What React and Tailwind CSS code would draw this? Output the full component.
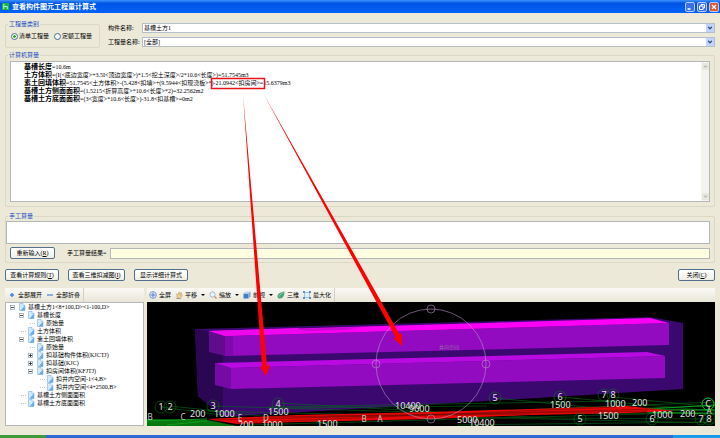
import { ChevronDown } from 'lucide-react';
import clsx from 'clsx';

const formulas = [
  ['基槽长度', '=10.6m'],
  ['土方体积', '=(I(<底边宽度>+3.5I<顶边宽度>)*1.5<挖土深度>/2*10.6<长度>)=51.7545m3'],
  ['素土回填体积', '=51.7545<土方体积>-(5.428<扣墙>+(9.5944<扣现浇板>*)-21.0942<扣房间>=15.6379m3'],
  ['基槽土方侧面面积', '=(1.5215<折算高度>*10.6<长度>*2)=32.2562m2'],
  ['基槽土方底面面积', '=(3<宽度>*10.6<长度>)-31.8<扣基槽>=0m2'],
];

const tree = [
  { depth: 0, mark: '-', text: '基槽土方1<8+100,D><1-100,D>' },
  { depth: 1, mark: '-', text: '基槽长度' },
  { depth: 2, text: '原始量' },
  { depth: 1, text: '土方体积' },
  { depth: 1, mark: '-', text: '素土回填体积' },
  { depth: 2, text: '原始量' },
  { depth: 2, mark: '+', text: '扣基础构件体积(KJCTJ)' },
  { depth: 2, mark: '+', text: '扣基础(KJC)' },
  { depth: 2, mark: '-', text: '扣房间体积(KFJTJ)' },
  { depth: 3, text: '扣井内空间-1<4,B>' },
  { depth: 3, text: '扣井内空间<4+2500,B>' },
  { depth: 1, text: '基槽土方侧面面积' },
  { depth: 1, text: '基槽土方底面面积' },
];

function TitleBar() {
  const button = 'flex size-[10px] items-center justify-center rounded-xs border border-[#b5cbf5]';
  return (
    <header className="flex h-[13px] items-center gap-[3px] bg-linear-to-b from-[#3c94ff] via-[#0054e3] via-25% to-[#0062ff] pr-px pl-[2px]">
      <svg viewBox="0 0 8 8" className="size-[7px]">
        <rect width="8" height="8" rx="1" fill="#18b83c" />
        <path d="M2 1v6M2 4h4v3" stroke="#d4ffd0" fill="none" />
      </svg>
      <h1 className="flex-1 text-[7px] font-bold text-white">查看构件图元工程量计算式</h1>
      <div className="flex gap-[2px]">
        <button aria-label="最小化" className={clsx(button, 'bg-[#3b70ea]')}>
          <svg viewBox="0 0 8 8" className="size-2"><path d="M1.500 6h3" stroke="#fff" strokeWidth="1.500" /></svg>
        </button>
        <button aria-label="还原" className={clsx(button, 'bg-[#3b70ea]')}>
          <svg viewBox="0 0 8 8" className="size-2" fill="none" stroke="#fff"><path d="M3 3V1.500h3.500V5H5M1.500 3h3.500v3.500H1.500z" /></svg>
        </button>
        <button aria-label="关闭窗口" className={clsx(button, 'bg-[#e2552d]')}>
          <svg viewBox="0 0 8 8" className="size-2"><path d="M2 2l4 4M6 2L2 6" stroke="#fff" strokeWidth="1.300" /></svg>
        </button>
      </div>
    </header>
  );
}

function Group({ title, className, children }) {
  return (
    <fieldset className={clsx('relative min-w-0 rounded-xs border border-[#dcd8c6]', className)}>
      <legend className="absolute -top-[5px] left-[2px] bg-[#ece9d8] px-px text-[#1c4fc0]">{title}</legend>
      {children}
    </fieldset>
  );
}

function Combo({ id, label, value }) {
  return (
    <div className="flex items-center">
      <label htmlFor={id} className="w-[34px]">{label}</label>
      <div className="relative flex-1">
        <select id={id} className="block h-[10px] w-full appearance-none border border-[#b5bfc8] bg-white pl-px leading-2">
          <option>{value}</option>
        </select>
        <span className="pointer-events-none absolute inset-y-px right-px flex w-2 items-center justify-center bg-[#c3d3fb]">
          <ChevronDown className="size-[6px] text-[#33507f]" strokeWidth={5} />
        </span>
      </div>
    </div>
  );
}

function PushButton({ className, children }) {
  return (
    <button className={clsx('h-3 rounded-xs border border-[#52708c] bg-linear-to-b from-white to-[#f0efe6] text-center leading-[9px]', className)}>
      {children}
    </button>
  );
}

function ScrollBar() {
  return (
    <div className="flex w-2 flex-col items-center justify-between bg-[#f4f3ee] py-px">
      <div className="flex size-[7px] items-center justify-center bg-[#e8e7e0]"><ChevronDown className="size-[5px] rotate-180 text-[#b9b7ab]" strokeWidth={5} /></div>
      <div className="flex size-[7px] items-center justify-center bg-[#e8e7e0]"><ChevronDown className="size-[5px] text-[#b9b7ab]" strokeWidth={5} /></div>
    </div>
  );
}

function PageIcon() {
  return (
    <svg viewBox="0 0 8 8" className="size-2 shrink-0">
      <path d="M1.500.5h3.500l2 2v5H1.500z" fill="#d3eafc" stroke="#7fb0e0" strokeWidth=".6" />
      <path d="M7 2.500v5H2.500z" fill="#6aabea" />
      <path d="M5 .5v2h2" fill="#fff" stroke="#7fb0e0" strokeWidth=".5" />
    </svg>
  );
}

const indents = ['pl-[4px]', 'pl-[13px]', 'pl-[22px]', 'pl-[32px]'];

function TreeRow({ depth, mark, text }) {
  return (
    <li className={clsx('flex h-2 items-center', indents[depth])}>
      <span className="flex w-[8px] items-center">
        {mark ? (
          <svg viewBox="0 0 5 5" className="size-[5px]">
            <rect x=".5" y=".5" width="4" height="4" fill="#fff" stroke="#8f9aa8" strokeWidth=".7" />
            <path d={mark === '+' ? 'M1 2.500h3M2.500 1v3' : 'M1 2.500h3'} stroke="#222" strokeWidth=".8" />
          </svg>
        ) : (
          <span className="ml-[2px] w-[5px] border-t border-dotted border-[#c9c9c9]" />
        )}
      </span>
      <PageIcon />
      <span className="ml-[2px] whitespace-nowrap">{text}</span>
    </li>
  );
}

const icons = {
  plus: <path d="M4 2v4M2 4h4" stroke="#4a82d8" strokeWidth="1.400" />,
  minus: <path d="M1 4h6" stroke="#4a82d8" strokeWidth="1.200" />,
  full: (
    <g fill="none" stroke="#5f7fc0" strokeWidth=".7">
      <circle cx="4" cy="4" r="3.400" fill="#dde6f8" />
      <path d="M4 1.500v5M1.500 4h5" strokeWidth="1" />
    </g>
  ),
  hand: (
    <g>
      <path d="M2 7.500V4.500L1 3.500l.8-.5 1 .8L4 1l.8.2-.3 2L6 1.400l.7.5L5.500 4.200 7 3.500l.4.6L5.500 7.500z" fill="#edcf98" stroke="#a98450" strokeWidth=".4" />
      <path d="M1.500 7.500h4" stroke="#8b8b8b" strokeWidth=".8" />
    </g>
  ),
  zoom: (
    <g fill="none" stroke="#8ba3c4">
      <circle cx="3.500" cy="3.500" r="2.600" fill="#eef4fc" strokeWidth=".7" />
      <path d="M5.500 5.500l2 2" stroke="#c28a58" strokeWidth="1.100" />
    </g>
  ),
  cube: (
    <g>
      <path d="M.5 2.500h5v5h-5z" fill="#3e7fc4" />
      <path d="M.5 2.500l2-2h5l-2 2z" fill="#b9d7f2" />
      <path d="M5.500 2.500l2-2v5l-2 2z" fill="#7aa9d9" />
    </g>
  ),
  solid: (
    <g>
      <path d="M.5 5.500C.5 3 3 1 7.500.5 7.500 4.500 6 7.500 3 7.500 1.500 7.500.5 7 .5 5.500z" fill="#48a478" />
      <path d="M2 5.500C3 3.500 4.500 2.500 6.500 1.500" stroke="#b6e4c8" strokeWidth=".7" fill="none" />
    </g>
  ),
  max: (
    <g>
      <path d="M1.500 1.500h5v5h-5z" fill="#e4f1fc" stroke="#6ba4d8" strokeWidth=".6" />
      <path d="M0 0h2v2H0zM6 0h2v2H6zM0 6h2v2H0zM6 6h2v2H6z" fill="#5292d0" />
    </g>
  ),
};

function ToolButton({ icon, label, menu }) {
  return (
    <button className="flex items-center gap-[2px]">
      <svg viewBox="0 0 8 8" className="size-2">{icons[icon]}</svg>
      {label}
      {menu && <span className="ml-[2px] border-x-2 border-t-2 border-x-transparent border-t-black" />}
    </button>
  );
}

// axis marks: [x, y, label]
const bubbles = [
  [14, 105, '1'], [23, 105, '2'], [66, 104, '3'], [131, 102, '4'], [348, 96, '5'], [413, 95, '6'],
  [457, 93, '7'], [466, 93, '8'], [433, 117, '5'], [505, 117, '6'], [554, 117, '7'], [562, 117, '8'],
  [561, 102, 'C'],
];

const letters = [
  [3, 115, 'B'], [36, 115, 'C'], [93, 116, 'E'], [119, 116, 'D'], [217, 117, 'B'], [233, 117, 'A'], [562, 109, 'A'],
];

const dims = [
  [43, 115, '200'], [67, 115, '1000'], [121, 113, '1500'], [91, 126, '200'], [115, 126, '1000'], [170, 125, '1500'],
  [248, 107, '10400'], [262, 110, '9000'], [310, 121, '5000'], [322, 124, '10400'], [403, 106, '1500'],
  [458, 105, '1000'], [485, 104, '200'], [451, 117, '1500'], [505, 116, '1000'], [533, 115, '200'],
];

function Scene() {
  return (
    <svg viewBox="0 0 568 124" preserveAspectRatio="xMinYMin slice" className="block h-[124px] w-full bg-black">
      <path d="M48 27L503 15 536 21V87L76 115 51 94z" fill="#3b0870" />
      <path d="M48 27L76 32V115L51 94z" fill="#2b0653" />
      <path d="M62 29L78 34V54L62 50z" fill="#610b8d" />
      <path d="M78 34L522 21V43L78 54z" fill="#930bc0" />
      <path d="M78 34L86 33V54L78 54z" fill="#8009ae" />
      <path d="M62 29L503 16 522 21 78 34z" fill="#ff00f6" />
      <path d="M62 29L150 26 168 30 78 34z" fill="#ee08ee" />
      <path d="M150 27L215 25 198 28 160 29z" fill="#c80ad2" />
      <path d="M68 61L84 66V87L68 83z" fill="#750ba4" />
      <path d="M84 66L518 54V76L84 87z" fill="#930bc0" />
      <path d="M68 61L500 50 518 54 84 66z" fill="#b90ae2" />
      <g stroke="#006c16" strokeWidth=".6" fill="none">
        <path d="M14 105L120 119M23 104L180 121M66 104L330 112 568 111M131 101L400 116 568 117M348 96L450 106 568 108M413 95L500 103 568 109M466 95L568 105M120 105L470 99M150 117L568 100M0 121L568 104M100 123L568 110M130 106L340 104M310 123L560 120M60 109L568 121" />
      </g>
      <path d="M0 117L60 118 90 124H0z" fill="#04780f" />
      <path d="M0 119L60 117M20 123L60 119M500 107L568 103M500 110L568 112M500 108L568 108" stroke="#0a9d18" fill="none" />
      <path d="M60 117L150 113 283 110 383 107 480 104 528 109 480 111 383 113 283 117 150 120 90 122z" fill="#e80606" />
      <path d="M70 118L510 107M90 121L470 105M180 114L500 109M120 115L383 112" stroke="#6b0b05" strokeWidth=".6" fill="none" />
      <g fill="none" stroke="#087018" strokeWidth=".6">
        {bubbles.map(([x, y], i) => <circle key={i} cx={x} cy={y} r="6" />)}
      </g>
      <circle cx="561" cy="102" r="6" fill="none" stroke="#0cb51f" />
      <g fill="#e0e0e0" className="font-['Noto_Sans',sans-serif] text-[9px]">
        {bubbles.map(([x, y, label], i) => <text key={i} x={x} y={y + 3} textAnchor="middle">{label}</text>)}
        {letters.map(([x, y, label], i) => <text key={i} x={x} y={y + 3} textAnchor="middle" fill="#c9c9c9" className="text-[8px]">{label}</text>)}
        {dims.map(([x, y, label], i) => <text key={i} x={x} y={y}>{label}</text>)}
      </g>
      <g fill="none" stroke="#b58fc4" strokeWidth=".6">
        <circle cx="284" cy="62" r="55" />
        <circle cx="284" cy="7" r="4" />
        <circle cx="229" cy="62" r="4" />
        <circle cx="339" cy="62" r="4" />
        <circle cx="284" cy="117" r="4" />
      </g>
      <text x="292" y="47" fill="#8f6ba5" className="text-[5px]">井内空间</text>
    </svg>
  );
}

function Annotations() {
  return (
    <svg className="pointer-events-none absolute top-0 left-0 h-full w-full" fill="#fb0303">
      <rect x="211.500" y="78.500" width="53" height="10" fill="none" stroke="#e8141c" strokeWidth="1.500" />
      <path d="M243 95L262 366 260 367 266 376 270 365 267 366z" />
      <path d="M263 93L396 338 393 338 402 346 402 333 400 335z" />
    </svg>
  );
}

export default function App() {
  return (
    <div className="relative overflow-hidden bg-[#ece9d8] font-['Liberation_Serif','Noto_Sans_CJK_SC',sans-serif] text-[6px] leading-2 text-black">
      <TitleBar />
      <main className="px-[5px] pt-[10px]">
        <div className="flex items-start gap-2">
          <Group title="工程量类别" className="mt-px flex h-6 w-[95px] items-center gap-[5px] px-[5px]">
            <label className="flex items-center gap-px">
              <input type="radio" name="kind" defaultChecked className="size-[7px] appearance-none rounded-full border border-[#3f6d90] bg-white bg-radial from-[#22a822] from-30% to-white to-45%" />
              清单工程量
            </label>
            <label className="flex items-center gap-px">
              <input type="radio" name="kind" className="size-[7px] appearance-none rounded-full border border-[#3f6d90] bg-white" />
              定额工程量
            </label>
          </Group>
          <div className="flex flex-1 flex-col gap-1">
            <Combo id="member" label="构件名称:" value="基槽土方1" />
            <Combo id="quantity" label="工程量名称:" value="[全部]" />
          </div>
        </div>

        <Group title="计算机算量" className="mt-[7px] p-1 pt-[5px]">
          <div className="flex h-[141px] border border-[#b4b8b8] bg-white">
            <div className="flex-1 pt-px pl-[13px]">
              {formulas.map(([name, text]) => (
                <p key={name} className="h-2 whitespace-nowrap"><b className="text-[7px]">{name}</b>{text}</p>
              ))}
            </div>
            <ScrollBar />
          </div>
        </Group>

        <Group title="手工算量" className="mt-[9px] pt-1 pr-1 pb-[3px]">
          <textarea aria-label="手工算量" className="block h-[23px] w-full resize-none border border-[#b4b8b8] bg-white" />
          <div className="mt-[3px] flex items-center pl-1">
            <PushButton className="w-[45px]">重新输入(<u>R</u>)</PushButton>
            <label htmlFor="result" className="ml-3 w-[43px]">手工算量结果=</label>
            <input id="result" className="h-[11px] min-w-0 flex-1 border border-[#b4b8b8] bg-[#ffffe1]" />
          </div>
        </Group>

        <div className="mt-[6px] flex gap-[9px]">
          <PushButton className="w-[54px]">查看计算规则(<u>T</u>)</PushButton>
          <PushButton className="w-[57px]">查看三维扣减图(<u>I</u>)</PushButton>
          <PushButton className="w-[54px]">显示详细计算式</PushButton>
          <PushButton className="ml-auto w-[37px]">关闭(<u>C</u>)</PushButton>
        </div>

        <div className="mt-[7px] flex gap-[3px]">
          <section className="flex w-[139px] flex-col">
            <div className="flex h-[14px] items-center bg-linear-to-b from-[#faf9f5] to-[#e9e6d8] pl-[3px]">
              <div className="flex h-full items-center gap-1 border-r border-[#d5d1c2] pr-[3px]">
                <ToolButton icon="plus" label="全部展开" />
                <ToolButton icon="minus" label="全部折叠" />
              </div>
            </div>
            <ul className="flex-1 border border-[#b4b8b8] bg-white">
              {tree.map((row, i) => <TreeRow key={i} {...row} />)}
            </ul>
          </section>
          <section className="min-w-0 flex-1">
            <div className="flex h-[14px] items-center bg-linear-to-b from-[#faf9f5] to-[#e9e6d8] pl-[2px]">
              <div className="flex h-full items-center gap-[4px] border-r border-[#d5d1c2] pr-[3px]">
                <ToolButton icon="full" label="全屏" />
                <ToolButton icon="hand" label="平移" menu />
                <ToolButton icon="zoom" label="缩放" menu />
                <ToolButton icon="cube" label="前视" menu />
                <ToolButton icon="solid" label="三维" />
                <ToolButton icon="max" label="最大化" />
              </div>
            </div>
            <Scene />
          </section>
        </div>
      </main>
      <footer className="mt-[9px] flex h-[3px] bg-[#2e67d8]">
        <div className="w-[46px] bg-[#3f9a3c]" />
        <div className="ml-auto w-[47px] bg-[#169be8]" />
      </footer>
      <Annotations />
    </div>
  );
}
